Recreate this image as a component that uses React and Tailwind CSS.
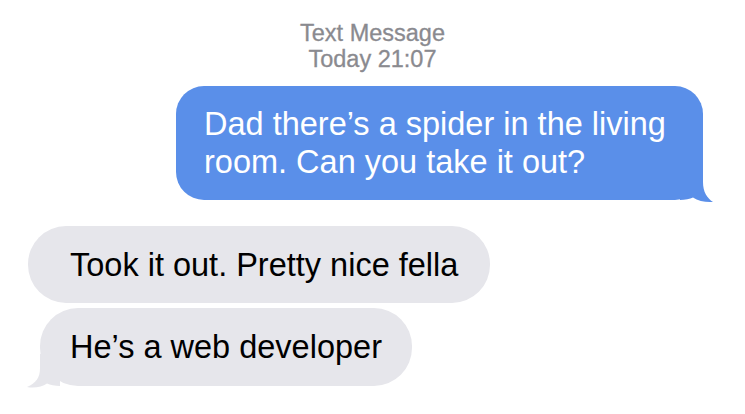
function Tail({ side, color }) {
  if (side === "right") {
    return (
      <svg
        className="absolute -right-[11px] -bottom-[4px]"
        width="34"
        height="36"
        viewBox="0 0 34 36"
      >
        <path
          d="M0 0 H23 V14 C23 24 27 30 33 34 C26 34.6 18 33 13 29.5 C10 31 5 32 0 32 Z"
          fill={color}
        />
      </svg>
    );
  }
  return (
    <svg
      className="absolute -left-[14px] -bottom-[4px]"
      width="34"
      height="36"
      viewBox="0 0 34 36"
    >
      <path
        d="M34 0 H14 V14 C14 24 10 29 1 33 C8 34.6 16 33 21 29.5 C24 31 29 32 34 32 Z"
        fill={color}
      />
    </svg>
  );
}

function App() {
  return (
    <div
      className="w-[745px] h-[414px] bg-white overflow-hidden flex flex-col"
      style={{ fontFamily: '"Liberation Sans", Arial, sans-serif' }}
    >
      <div className="pt-[20px] text-center text-[#8a8a8f] text-[23.5px] leading-[26px] [-webkit-text-stroke:0.3px_#8a8a8f]">
        <div>Text Message</div>
        <div>Today 21:07</div>
      </div>

      <div className="flex justify-end pr-[42px] mt-[14px]">
        <div className="relative w-[527px] bg-[#5a8fe9] text-white text-[32.5px] leading-[38px] rounded-[28px] pl-[28px] pr-[20px] pt-[19px] pb-[19px]">
          Dad there’s a spider in the living room. Can you take it out?
          <Tail side="right" color="#5a8fe9" />
        </div>
      </div>

      <div className="flex flex-col items-start mt-[26px]">
        <div className="ml-[28px] w-[462px] bg-[#e6e6eb] text-black text-[32.5px] leading-[38px] rounded-[38px] pl-[42px] pt-[20px] pb-[19px]">
          Took it out. Pretty nice fella
        </div>
        <div className="relative mt-[5px] ml-[40px] w-[372px] bg-[#e6e6eb] text-black text-[32.5px] leading-[38px] rounded-[38px] pl-[30px] pt-[20px] pb-[20px]">
          He’s a web developer
          <Tail side="left" color="#e6e6eb" />
        </div>
      </div>
    </div>
  );
}

export default App;
